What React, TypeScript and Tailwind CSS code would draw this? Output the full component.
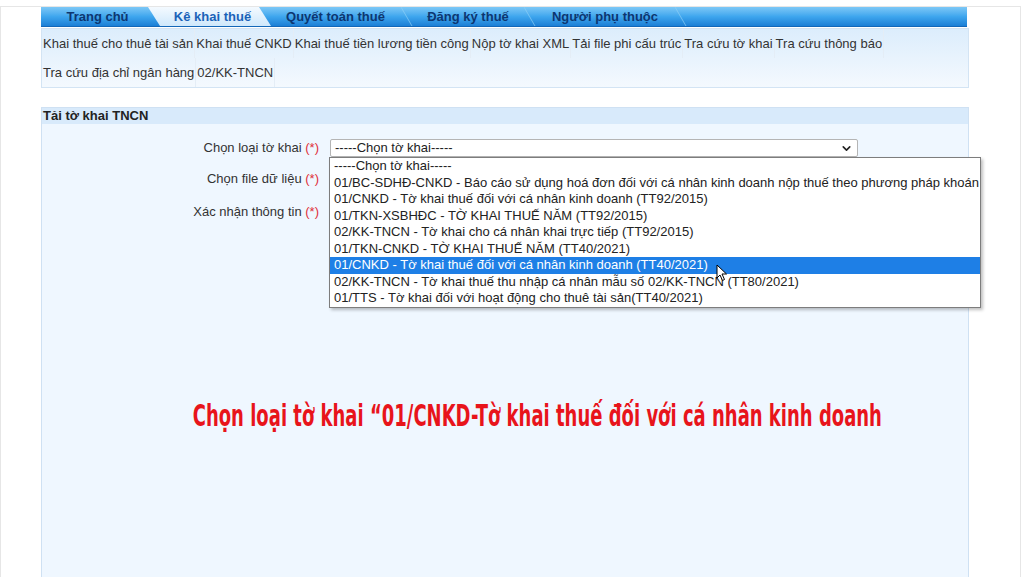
import { ChevronDown } from 'lucide-react';

const tabs = [
    { label: 'Trang chủ', w: 'w-[113px]' },
    { label: 'Kê khai thuế', w: 'w-[123px]', active: true },
    { label: 'Quyết toán thuế', w: 'w-[141px]' },
    { label: 'Đăng ký thuế', w: 'w-[122px]' },
    { label: 'Người phụ thuộc', w: 'w-[150px]' },
];

const subRow1 = [
    'Khai thuế cho thuê tài sản',
    'Khai thuế CNKD',
    'Khai thuế tiền lương tiền công',
    'Nộp tờ khai XML',
    'Tải file phi cấu trúc',
    'Tra cứu tờ khai',
    'Tra cứu thông báo',
];

const subRow2 = ['Tra cứu địa chỉ ngân hàng', '02/KK-TNCN'];

const options = [
    '-----Chọn tờ khai-----',
    '01/BC-SDHĐ-CNKD - Báo cáo sử dụng hoá đơn đối với cá nhân kinh doanh nộp thuế theo phương pháp khoán',
    '01/CNKD - Tờ khai thuế đối với cá nhân kinh doanh (TT92/2015)',
    '01/TKN-XSBHĐC - TỜ KHAI THUẾ NĂM (TT92/2015)',
    '02/KK-TNCN - Tờ khai cho cá nhân khai trực tiếp (TT92/2015)',
    '01/TKN-CNKD - TỜ KHAI THUẾ NĂM (TT40/2021)',
    '01/CNKD - Tờ khai thuế đối với cá nhân kinh doanh (TT40/2021)',
    '02/KK-TNCN - Tờ khai thuế thu nhập cá nhân mẫu số 02/KK-TNCN (TT80/2021)',
    '01/TTS - Tờ khai đối với hoạt động cho thuê tài sản(TT40/2021)',
];

const SELECTED = 6;

function Sep() {
    return <div className="w-px h-full bg-[#8fd0f7] skew-x-[30deg] opacity-70" />;
}

function FormLabel({ text }: { text: string }) {
    return (
        <div className="w-[288px] text-right pr-[11px] text-[13px] text-[#333]">
            {text} <span className="text-[#e0303a]">(*)</span>
        </div>
    );
}

export default function App() {
    return (
        <div className="w-[1024px] h-[577px] overflow-hidden bg-white font-['Liberation_Sans',Arial,sans-serif]">
            <div className="mt-[6px] w-[1021px] h-[571px] border-t border-l border-r border-[#e6e6e6] pl-[40px]">
                {/* tab bar */}
                <div className="w-[926px] h-[20px] flex bg-gradient-to-b from-[#7cc8f6] via-[#3ea6ee] to-[#1b7fd6] border-b border-[#1367b8] overflow-hidden">
                    {tabs.map((t, i) => (
                        <div key={t.label} className="flex h-full">
                            {t.active ? (
                                <div
                                    className={`${t.w} -ml-[6px] -mr-[6px] h-full flex items-center justify-center bg-gradient-to-b from-[#f4faff] to-[#cfe8fb] [clip-path:polygon(0_0,calc(100%-12px)_0,100%_100%,12px_100%)] text-[13px] font-bold text-[#1a62b8]`}
                                >
                                    <span className="pl-[6px]">{t.label}</span>
                                </div>
                            ) : (
                                <div className={`${t.w} h-full flex items-center justify-center text-[13px] font-bold text-[#0d3670]`}>
                                    {t.label}
                                </div>
                            )}
                            {!t.active && !tabs[i + 1]?.active && <Sep />}
                        </div>
                    ))}
                </div>

                {/* sub menu */}
                <div className="w-[928px] h-[60px] mt-px bg-gradient-to-b from-[#dcedfc] to-[#f4f9fe] border border-[#d3e4f4] text-[13px] text-[#333]">
                    <div className="flex h-[29px] items-center">
                        {subRow1.map((s) => (
                            <div key={s} className="px-[1px] h-full flex items-center border-r border-[#e4edf6]">
                                {s}
                            </div>
                        ))}
                    </div>
                    <div className="flex h-[29px] items-center">
                        {subRow2.map((s) => (
                            <div key={s} className="px-[1px] h-full flex items-center border-r border-[#e4edf6]">
                                {s}
                            </div>
                        ))}
                    </div>
                </div>

                {/* panel */}
                <div className="w-[928px] h-[480px] mt-[19px] border border-[#cfe1f3] bg-[#eff7ff]">
                    <div className="h-[16px] bg-[#d8eafb] flex items-center pl-[1px] text-[13px] font-bold text-[#222]">
                        Tải tờ khai TNCN
                    </div>

                    <div className="pt-[15px] flex flex-col">
                        <div className="flex items-center h-[18px]">
                            <FormLabel text="Chọn loại tờ khai" />
                            <div className="relative">
                                <div className="w-[528px] h-[18px] bg-white border border-[#b5b5b5] rounded-[2px] flex items-center justify-between pl-[4px] pr-[4px] text-[13px] text-[#222]">
                                    <span>-----Chọn tờ khai-----</span>
                                    <ChevronDown size={13} strokeWidth={3} className="text-[#222]" />
                                </div>
                                <div className="absolute left-[-1px] top-[18px] w-[652px] bg-white border border-[#7d7d7d] shadow-[2px_2px_3px_rgba(0,0,0,0.25)] z-10 text-[13px] text-[#222]">
                                    {options.map((o, i) => (
                                        <div
                                            key={i}
                                            className={`h-[16.5px] leading-[16.5px] pl-[4px] whitespace-nowrap ${i === SELECTED ? 'bg-[#1e7fe6] text-white' : ''}`}
                                        >
                                            {o}
                                        </div>
                                    ))}
                                </div>
                                <svg
                                    className="absolute left-[386px] top-[125px] z-20"
                                    width="12"
                                    height="18"
                                    viewBox="0 0 12 18"
                                >
                                    <path d="M1 1 L1 14 L4 11 L6.5 16.5 L8.5 15.5 L6 10 L10.5 10 Z" fill="white" stroke="black" strokeWidth="1" />
                                </svg>
                            </div>
                        </div>
                        <div className="flex items-center h-[18px] mt-[13px]">
                            <FormLabel text="Chọn file dữ liệu" />
                        </div>
                        <div className="flex items-center h-[18px] mt-[15px]">
                            <FormLabel text="Xác nhận thông tin" />
                        </div>
                    </div>

                    <div className="mt-[178px] flex justify-center pl-[64px]">
                        <div className="whitespace-nowrap scale-x-[0.6] text-[#e8141b] font-bold text-[30px] leading-[34px] font-['DejaVu_Sans',sans-serif]">
                            Chọn loại tờ khai “01/CNKD-Tờ khai thuế đối với cá nhân kinh doanh
                        </div>
                    </div>
                </div>
            </div>
        </div>
    );
}
